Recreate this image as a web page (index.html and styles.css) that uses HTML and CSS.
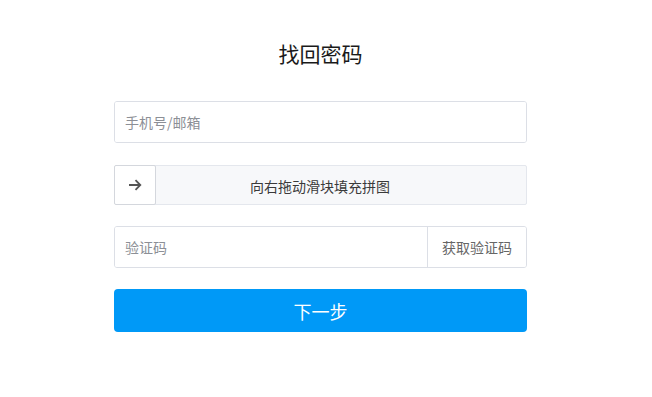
FILE: index.html
```html
<html>
  <head>
    <meta charset="utf-8" />
    <title>找回密码</title>
    <link rel="stylesheet" href="styles.css">
  </head>
  <body>
    <div class="page">
      <h2 class="title">找回密码</h2>
      <form class="form">
        <div class="field">
          <input class="input" type="text" placeholder="手机号/邮箱" />
        </div>
        <div class="slider">
          <div class="slider-handle">
            <svg width="14" height="12" viewBox="0 0 14 12">
              <path d="M1 6h11.5M7.5 1.2L12.3 6l-4.8 4.8" fill="none" stroke="#555" stroke-width="1.8" />
            </svg>
          </div>
          <div class="slider-text">向右拖动滑块填充拼图</div>
        </div>
        <div class="field code-field">
          <input class="input code-input" type="text" placeholder="验证码" />
          <button type="button" class="code-button">获取验证码</button>
        </div>
        <button type="button" class="next-button">下一步</button>
      </form>
    </div>
  </body>
</html>
```

FILE: styles.css
```css
* {
  box-sizing: border-box;
  margin: 0;
  padding: 0;
  font-family: "Noto Sans CJK SC", "Noto Sans", sans-serif;
}

body {
  background: #fff;
  padding-right: 11px;
}

.page {
  width: 413px;
  margin: 0 auto;
  padding-top: 38px;
}

.title {
  text-align: center;
  font-size: 21px;
  font-weight: normal;
  color: #1a1a1a;
  line-height: 30px;
  margin-bottom: 33px;
}

.field {
  display: flex;
  height: 42px;
  border: 1px solid #dcdfe6;
  border-radius: 3px;
  margin-bottom: 22px;
  overflow: hidden;
}

.input {
  flex: 1;
  border: none;
  outline: none;
  padding: 0 10px;
  font-size: 14px;
  color: #333;
}

.input::placeholder {
  color: #8c8f96;
}

.slider {
  display: flex;
  height: 40px;
  border: 1px solid #e4e7ed;
  border-radius: 2px;
  background: #f7f8fa;
  margin-bottom: 21px;
}

.slider-handle {
  width: 42px;
  margin: -1px 0 -1px -1px;
  background: #fff;
  border: 1px solid #d4d7dd;
  border-radius: 2px;
  display: flex;
  align-items: center;
  justify-content: center;
}

.slider-text {
  flex: 1;
  text-align: center;
  line-height: 40px;
  font-size: 14px;
  color: #3a3a3a;
  padding-right: 42px;
}

.code-field {
  margin-bottom: 21px;
}

.code-button {
  width: 99px;
  border: none;
  border-left: 1px solid #dcdfe6;
  background: #fff;
  font-size: 14px;
  color: #666;
}

.next-button {
  display: block;
  width: 100%;
  height: 43px;
  border: none;
  border-radius: 4px;
  background: #0099f7;
  color: #fff;
  font-size: 18px;
}
```
